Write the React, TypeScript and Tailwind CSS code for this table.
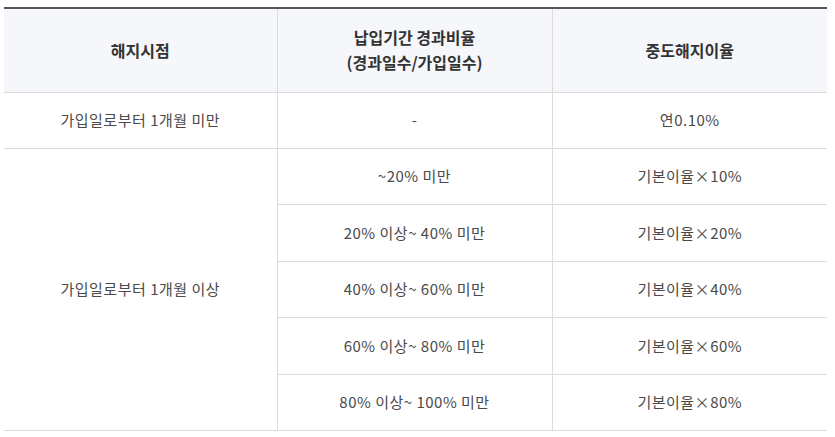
const rows = [
  { range: "~20% 미만", rate: "10%" },
  { range: "20% 이상~ 40% 미만", rate: "20%" },
  { range: "40% 이상~ 60% 미만", rate: "40%" },
  { range: "60% 이상~ 80% 미만", rate: "60%" },
  { range: "80% 이상~ 100% 미만", rate: "80%" },
];

const font = { fontFamily: '"Noto Sans CJK KR", "Noto Sans", sans-serif' };

export default function App() {
  return (
    <div className="min-h-[437px] bg-white pl-[4px] pt-[7px]" style={font}>
      <table className="w-[823px] table-fixed border-collapse border-t-2 border-t-[#555] text-center text-[15px] tracking-[0.5px] text-[#4a4a4a]">
        <colgroup>
          <col className="w-[273px]" />
          <col className="w-[275px]" />
          <col className="w-[275px]" />
        </colgroup>
        <thead>
          <tr className="h-[84px] bg-[#f6f7fb] text-[16px] font-bold leading-[25px] tracking-normal text-[#333]">
            <th className="border-b border-r border-[#dcdcdc]">해지시점</th>
            <th className="border-b border-r border-[#dcdcdc]">
              납입기간 경과비율
              <br />
              (경과일수/가입일수)
            </th>
            <th className="border-b border-[#dcdcdc]">중도해지이율</th>
          </tr>
        </thead>
        <tbody>
          <tr className="h-[56px]">
            <td className="border-b border-r border-[#dcdcdc]">가입일로부터 1개월 미만</td>
            <td className="border-b border-r border-[#dcdcdc]">-</td>
            <td className="border-b border-[#dcdcdc]">연0.10%</td>
          </tr>
          {rows.map((row, i) => (
            <tr key={row.range} className="h-[56.6px]">
              {i === 0 ? (
                <td rowSpan={rows.length} className="border-b border-r border-[#dcdcdc]">
                  가입일로부터 1개월 이상
                </td>
              ) : null}
              <td className="border-b border-r border-[#dcdcdc]">{row.range}</td>
              <td className="border-b border-[#dcdcdc]">
                기본이율<span className="[font-feature-settings:'fwid']">×</span>
                {row.rate}
              </td>
            </tr>
          ))}
        </tbody>
      </table>
    </div>
  );
}
